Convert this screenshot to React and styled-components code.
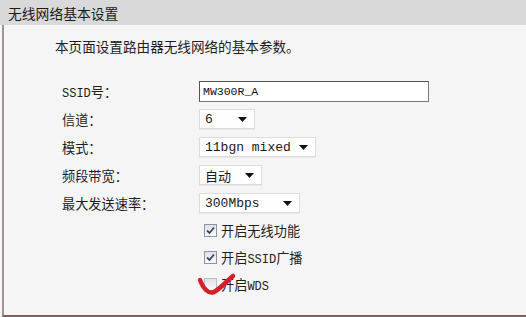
import React from 'react';
import styled, { createGlobalStyle } from 'styled-components';

const GlobalStyle = createGlobalStyle`
  html, body {
    margin: 0;
    padding: 0;
    background: #f5f5f5;
  }
  body {
    font-family: "Noto Sans CJK SC", "Liberation Sans", sans-serif;
    color: #1e1e1e;
  }
`;

const Page = styled.div`
  width: 526px;
  height: 317px;
  display: flex;
  flex-direction: column;
  overflow: hidden;
`;

const TitleBar = styled.div`
  height: 25px;
  flex: none;
  display: flex;
  align-items: center;
  padding-left: 8px;
  background: #d9d9d9;
  font-size: 13.8px;
  color: #1a1a1a;
`;

const Panel = styled.div`
  flex: 1;
  margin-left: 2px;
  padding: 12px 0 0 51px;
  background: #f5f5f5;
  border-left: 2px solid #a69090;
  border-bottom: 2px solid #7b6262;
`;

const Intro = styled.p`
  margin: 0;
  height: 18px;
  line-height: 18px;
  font-size: 13.6px;
  color: #1e1e1e;
`;

const Form = styled.div`
  margin: 22px 0 0 7px;
  display: grid;
  grid-template-columns: 137px auto;
  grid-auto-rows: 28px;
  align-items: center;
`;

const Label = styled.div`
  font-size: 13.2px;
  color: #1e1e1e;
`;

const Latin = styled.span`
  font-family: "Liberation Mono", monospace;
  font-size: 12px;
`;

const TextInput = styled.div`
  width: 230px;
  height: 21px;
  box-sizing: border-box;
  display: flex;
  align-items: center;
  padding-left: 3px;
  background: #fff;
  border: 1.5px solid #555;
  border-right-color: #777;
  border-bottom-color: #777;
  font-family: "Liberation Mono", monospace;
  font-size: 11.5px;
  color: #111;
`;

const Select = styled.div`
  width: ${({ $w }) => $w}px;
  height: 20px;
  box-sizing: border-box;
  display: flex;
  align-items: center;
  justify-content: space-between;
  padding: 0 7px 0 5px;
  background: #fefefe;
  border: 1px solid #dcdcdc;
  box-shadow: 0 1px 0 #e8e8e8;
  font-family: "Liberation Mono", "Noto Sans CJK SC", monospace;
  font-size: 13px;
  color: #1a1a1a;
`;

const Arrow = styled.svg`
  width: 9px;
  height: 5px;
  flex: none;
`;

const Checks = styled.div`
  grid-column: 2;
  grid-row: span 3;
  align-self: start;
  padding-left: 5px;
  display: flex;
  flex-direction: column;
`;

const CheckRow = styled.div`
  position: relative;
  height: 27px;
  display: flex;
  align-items: center;
  gap: 4px;
  font-size: 13.2px;
  color: #1e1e1e;
`;

const Box = styled.span`
  width: 13px;
  height: 13px;
  box-sizing: border-box;
  flex: none;
  display: flex;
  align-items: center;
  justify-content: center;
  border: 1px solid ${({ $on }) => ($on ? '#8797a8' : '#b4bcc4')};
  background: linear-gradient(#dfe2e6, #fbfbfb);
`;

const Mark = styled.svg`
  position: absolute;
  left: -5px;
  top: 2px;
  width: 36px;
  height: 24px;
  overflow: visible;
  pointer-events: none;
`;

const DropArrow = () => (
  <Arrow viewBox="0 0 9 5">
    <path d="M0 0 L9 0 L4.5 5 Z" fill="#111" />
  </Arrow>
);

const Checkbox = ({ on }) => (
  <Box $on={on}>
    {on && (
      <svg width="9" height="9" viewBox="0 0 9 9">
        <path d="M1 4.5 L3.5 7 L8 1.5" fill="none" stroke="#3b4658" strokeWidth="1.8" />
      </svg>
    )}
  </Box>
);

const selects = [
  { label: '信道：', value: '6', w: 56 },
  { label: '模式：', value: '11bgn mixed', w: 117 },
  { label: '频段带宽：', value: '自动', w: 63 },
  { label: '最大发送速率：', value: '300Mbps', w: 101 },
];

export default function App() {
  return (
    <Page>
      <GlobalStyle />
      <TitleBar>无线网络基本设置</TitleBar>
      <Panel>
        <Intro>本页面设置路由器无线网络的基本参数。</Intro>
        <Form>
          <Label>
            <Latin>SSID</Latin>号：
          </Label>
          <TextInput>MW300R_A</TextInput>
          {selects.map((s) => (
            <React.Fragment key={s.label}>
              <Label>{s.label}</Label>
              <Select $w={s.w}>
                <span>{s.value}</span>
                <DropArrow />
              </Select>
            </React.Fragment>
          ))}
          <Checks>
            <CheckRow>
              <Checkbox on />
              开启无线功能
            </CheckRow>
            <CheckRow>
              <Checkbox on />
              <span>
                开启<Latin>SSID</Latin>广播
              </span>
            </CheckRow>
            <CheckRow>
              <Checkbox />
              <span>
                开启<Latin>WDS</Latin>
              </span>
              <Mark viewBox="0 0 36 24">
                <path
                  d="M1 7 C4 15 9 21 15 19 C21 16 28 8 34 3"
                  fill="none"
                  stroke="#d41f2c"
                  strokeWidth="4.5"
                  strokeLinecap="round"
                />
              </Mark>
            </CheckRow>
          </Checks>
        </Form>
      </Panel>
    </Page>
  );
}
